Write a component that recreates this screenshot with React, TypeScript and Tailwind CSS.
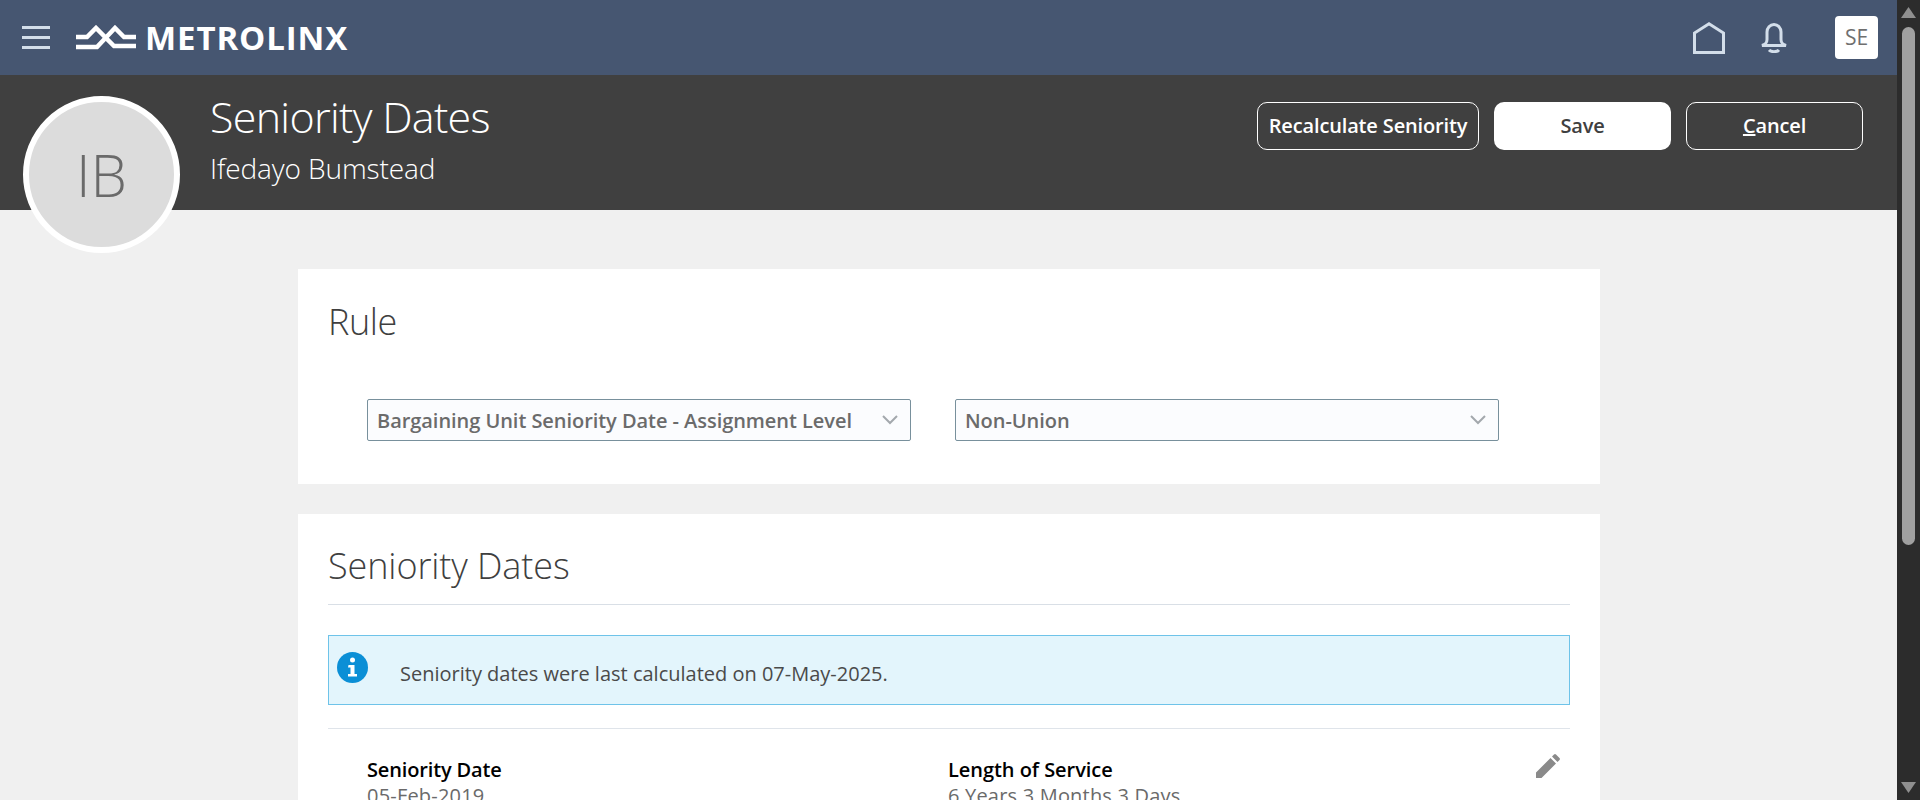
const sans = "font-['Open_Sans','Noto_Sans',sans-serif]";

function Chevron() {
  return (
    <svg width="18" height="12" viewBox="0 0 18 12" fill="none" stroke="#a3a8ad" strokeWidth="2">
      <path d="M2 2l7 7 7-7" />
    </svg>
  );
}

function Select({ label }: { label: string }) {
  return (
    <div className="w-[544px] h-[42px] flex items-center justify-between pl-[9px] pr-[11px] bg-[#fbfcfe] border border-[#78909c] rounded-[2px]">
      <span className="pt-[1px] text-[20px] font-semibold text-[#6b6b6b] tracking-[-0.05px]">{label}</span>
      <Chevron />
    </div>
  );
}

export default function App() {
  return (
    <div className={`${sans} h-[800px] w-full overflow-hidden flex bg-[#f0f0f0]`}>
      <div className="relative flex-1 flex flex-col min-w-0">
        <header className="h-[75px] bg-[#465671] flex items-center shrink-0">
          <div className="ml-[22px] w-[28px] flex flex-col gap-[7px]">
            <span className="h-[3px] bg-[#d3deea]" />
            <span className="h-[3px] bg-[#d3deea]" />
            <span className="h-[3px] bg-[#d3deea]" />
          </div>
          <svg className="ml-[26px]" width="60" height="25" viewBox="0 0 60 25" fill="none" stroke="#fff" strokeWidth="4.500">
            <path d="M0 12h11l9-9 18 18h22" />
            <path d="M0 22h21L39 3l9 9h12" />
          </svg>
          <span className="ml-[9px] text-[33px] leading-none font-bold text-white tracking-[0.9px]">METROLINX</span>
          <div className="ml-auto flex items-center">
            <svg width="32" height="32" viewBox="0 0 32 32" fill="none" stroke="#d3deea" strokeWidth="3">
              <path d="M1.500 30.500V11L16 1.800 30.500 11v19.500z" />
            </svg>
            <svg className="ml-[36px]" width="26" height="30" viewBox="0 0 26 30" fill="none" stroke="#d3deea" strokeWidth="3">
              <path d="M1 22.500c3-1 5-2 5-6V9c0-4 3-7.500 7-7.500S20 5 20 9v7.500c0 4 2 5 5 6z" />
              <path d="M8 27c2 2.200 8 2.200 10 0" />
            </svg>
            <div className="ml-[48px] mr-[19px] w-[43px] h-[43px] bg-white rounded-[4px] flex items-center justify-center text-[21px] text-[#6f6f6f]">SE</div>
          </div>
        </header>

        <section className="h-[135px] bg-[#404040] shrink-0 flex justify-between">
          <div className="ml-[210px] text-white">
            <h1 className="mt-[16px] text-[43px] leading-[52px] font-light tracking-[-0.7px]">Seniority Dates</h1>
            <p className="mt-[8px] text-[28px] leading-[34px] font-light tracking-[-0.1px]">Ifedayo Bumstead</p>
          </div>
          <div className="mt-[27px] mr-[34px] flex gap-[15px]">
            <button className="w-[222px] h-[48px] rounded-[10px] border border-white text-white text-[20px] font-semibold tracking-[-0.15px]">Recalculate Seniority</button>
            <button className="w-[177px] h-[48px] rounded-[10px] bg-white text-[#404040] text-[20px] font-semibold tracking-[-0.15px]">Save</button>
            <button className="w-[177px] h-[48px] rounded-[10px] border border-white text-white text-[20px] font-semibold tracking-[-0.15px]"><u>C</u>ancel</button>
          </div>
        </section>

        <div className="absolute left-[23px] top-[96px] w-[157px] h-[157px] rounded-full bg-[#dcdcdc] border-[6px] border-white flex items-center justify-center text-[58px] font-light text-[#6a6a6a]">IB</div>

        <div className="ml-[298px] w-[1302px] mt-[59px] flex flex-col gap-[30px]">
          <section className="h-[215px] bg-white px-[30px]">
            <h2 className="pt-[29px] text-[36px] leading-[48px] font-light text-[#3f3f3f] tracking-[-0.4px]">Rule</h2>
            <div className="mt-[53px] ml-[39px] flex gap-[44px]">
              <Select label="Bargaining Unit Seniority Date - Assignment Level" />
              <Select label="Non-Union" />
            </div>
          </section>

          <section className="h-[400px] bg-white px-[30px]">
            <h2 className="pt-[28px] pb-[14px] text-[36px] leading-[48px] font-light text-[#3f3f3f] tracking-[-0.1px] border-b border-[#d9dfe6]">Seniority Dates</h2>
            <div className="mt-[30px] h-[70px] bg-[#e3f5fc] border border-[#6ec3e9] flex items-center pl-[8px]">
              <svg className="-mt-[6px]" width="31" height="31" viewBox="0 0 31 31">
                <circle cx="15.500" cy="15.500" r="15.500" fill="#0b8fd6" />
                <circle cx="15.500" cy="8" r="2.500" fill="#fff" />
                <path d="M11.500 13h6v9h2.500v2.500h-9V22h2.500v-6.500h-2.500z" fill="#fff" />
              </svg>
              <p className="ml-[32px] pt-[7px] text-[20px] text-[#4a4a4a]">Seniority dates were last calculated on 07-May-2025.</p>
            </div>
            <div className="mt-[23px] border-t border-[#dfe4ea] flex pt-[28px] pl-[39px] relative">
              <div className="w-[581px]">
                <div className="text-[20px] leading-[26px] font-semibold text-black tracking-[-0.15px]">Seniority Date</div>
                <div className="text-[20px] leading-[26px] text-[#6a6a6a] tracking-[0.2px]">05-Feb-2019</div>
              </div>
              <div>
                <div className="text-[20px] leading-[26px] font-semibold text-black tracking-[-0.05px]">Length of Service</div>
                <div className="text-[20px] leading-[26px] text-[#6a6a6a] tracking-[0.2px]">6 Years 3 Months 3 Days</div>
              </div>
              <svg className="absolute right-[10px] top-[25px]" width="24" height="24" viewBox="0 0 24 24" fill="#8a8a8a">
                <path d="M0 24v-5.500L14.500 4 20 9.500 5.500 24zM16 2.500l2-2a1.500 1.500 0 0 1 2 0l3.500 3.500a1.500 1.500 0 0 1 0 2l-2 2z" />
              </svg>
            </div>
          </section>
        </div>
      </div>

      <aside className="w-[23px] shrink-0 bg-[#2c2c2c] flex flex-col items-center">
        <svg className="mt-[7px]" width="15" height="11" viewBox="0 0 15 11"><path d="M7.500 0L15 11H0z" fill="#8f8f8f" /></svg>
        <div className="mt-[9px] w-[13px] h-[518px] rounded-full bg-[#a0a0a0]" />
        <svg className="mt-auto mb-[7px]" width="15" height="11" viewBox="0 0 15 11"><path d="M7.500 11L15 0H0z" fill="#8f8f8f" /></svg>
      </aside>
    </div>
  );
}
